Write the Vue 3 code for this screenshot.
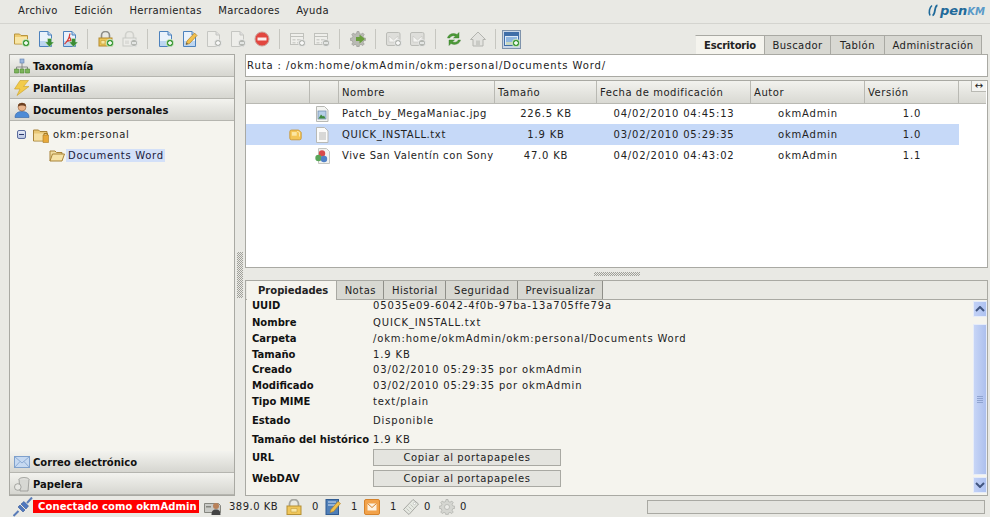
<script setup>
const menus = ['Archivo', 'Edición', 'Herramientas', 'Marcadores', 'Ayuda']

const tools = [
  'folder-add', 'doc-down', 'pdf-down', '|', 'lock-add', 'lock-off', '|',
  'doc-add', 'doc-edit', 'doc-off-add', 'doc-off-del', 'stop', '|',
  'form-add', 'form-del', '|', 'gear-go', '|', 'mail-add', 'mail-del', '|',
  'refresh', 'home', '|',
]

const topTabs = ['Escritorio', 'Buscador', 'Tablón', 'Administración']
const bottomTabs = ['Propiedades', 'Notas', 'Historial', 'Seguridad', 'Previsualizar']
const columns = ['', '', 'Nombre', 'Tamaño', 'Fecha de modificación', 'Autor', 'Versión']

const files = [
  { icon: 'file-img', name: 'Patch_by_MegaManiac.jpg', size: '226.5 KB', date: '04/02/2010 04:45:13', author: 'okmAdmin', version: '1.0' },
  { icon: 'file-txt', name: 'QUICK_INSTALL.txt', size: '1.9 KB', date: '03/02/2010 05:29:35', author: 'okmAdmin', version: '1.0', selected: true },
  { icon: 'file-mix', name: 'Vive San Valentín con Sony', size: '47.0 KB', date: '04/02/2010 04:43:02', author: 'okmAdmin', version: '1.1' },
]

const props = [
  ['UUID', '05035e09-6042-4f0b-97ba-13a705ffe79a'],
  ['Nombre', 'QUICK_INSTALL.txt'],
  ['Carpeta', '/okm:home/okmAdmin/okm:personal/Documents Word'],
  ['Tamaño', '1.9 KB'],
  ['Creado', '03/02/2010 05:29:35 por okmAdmin'],
  ['Modificado', '03/02/2010 05:29:35 por okmAdmin'],
  ['Tipo MIME', 'text/plain'],
  ['Estado', 'Disponible'],
  ['Tamaño del histórico', '1.9 KB'],
]

const stats = [
  { icon: 'st-lock', value: '0', cls: 'st-a' },
  { icon: 'st-note', value: '1', cls: 'st-a' },
  { icon: 'st-mail', value: '1', cls: 'st-a' },
  { icon: 'st-tag', value: '0', cls: 'st-b' },
  { icon: 'st-gear', value: '0', cls: 'st-b' },
]
</script>

<template>
  <div class="app">
    <svg class="defs" aria-hidden="true">
      <symbol id="b-add" viewBox="0 0 16 16"><circle cx="12" cy="12" r="3.8" fill="#3f9a3a" stroke="#e8f5e0" stroke-width=".8" /><path d="M12 10v4M10 12h4" stroke="#fff" stroke-width="1.4" /></symbol>
      <symbol id="b-off-add" viewBox="0 0 16 16"><circle cx="12" cy="12" r="3.6" fill="#b4b7b2" stroke="#eee" stroke-width=".8" /><path d="M12 10v4M10 12h4" stroke="#fff" stroke-width="1.3" /></symbol>
      <symbol id="b-off-del" viewBox="0 0 16 16"><circle cx="12" cy="12" r="3.6" fill="#b4b7b2" stroke="#eee" stroke-width=".8" /><path d="M10 12h4" stroke="#fff" stroke-width="1.3" /></symbol>
      <symbol id="b-down" viewBox="0 0 16 16"><path d="M9.500 7.500h4v3.500h2.500L11.500 16 7 11h2.500z" fill="#3c8d35" stroke="#d7ecd0" stroke-width=".5" /></symbol>
      <symbol id="s-doc" viewBox="0 0 16 16"><path d="M1.500 .5h8.500l3.500 3.500v11.500h-12z" fill="#eaf2fb" stroke="#4d82bd" /><path d="M10 .5v3.500h3.500" fill="#bcd4ee" stroke="#4d82bd" /><path d="M2 10h11v5H2z" fill="#bdd6f0" /></symbol>
      <symbol id="s-doc-off" viewBox="0 0 16 16"><path d="M1.500 .5h8.500l3.500 3.500v11.500h-12z" fill="#eeeeea" stroke="#c5c6c2" /><path d="M10 .5v3.500h3.500" fill="#ddd" stroke="#c5c6c2" /></symbol>
      <symbol id="s-form" viewBox="0 0 16 16"><rect x=".5" y="2.500" width="13" height="11" fill="#efefeb" stroke="#c0c1bc" /><path d="M.5 5.500h13" stroke="#c0c1bc" /><path d="M2.500 8h3v1.500h-3zM7 8h4.500v1.500H7zM2.500 11h3v1.500h-3zM7 11h4.500v1.500H7z" fill="#cfd0cb" /></symbol>
      <symbol id="s-mail" viewBox="0 0 16 16"><rect x=".5" y="1.500" width="13.500" height="13" rx="1.500" fill="#dededa" stroke="#bbbcb7" /><path d="M3 5l4.500 4L12 5v6H3z" fill="#f5f5f2" stroke="#c4c5c0" stroke-width=".6" /></symbol>

      <symbol id="folder-add" viewBox="0 0 16 16"><path d="M.5 3h5l1.500 1.500h6.500v8.500H.5z" fill="#f0cd72" stroke="#b8953f" /><path d="M1 6h12v6.500H1z" fill="#f8e6a6" /><use href="#b-add" /></symbol>
      <symbol id="doc-down" viewBox="0 0 16 16"><use href="#s-doc" /><use href="#b-down" /></symbol>
      <symbol id="pdf-down" viewBox="0 0 16 16"><use href="#s-doc" /><path d="M8 2.500C7 8 5 11 2.500 13M7.500 6c1 3 3 5 6 5.500M4 10.500c2-.8 4-1 7-.8" fill="none" stroke="#d8322c" stroke-width="1.200" /><use href="#b-down" /></symbol>
      <symbol id="lock-add" viewBox="0 0 16 16"><path d="M3.500 7V4.500a4 4 0 0 1 8 0V7" fill="none" stroke="#8d8d88" stroke-width="1.600" /><rect x="1" y="7" width="13" height="8" fill="#ecc557" stroke="#b48a2c" /><path d="M3 9.500h4v3.500H3z" fill="#f8e6a0" stroke="#c19a37" stroke-width=".6" /><use href="#b-add" /></symbol>
      <symbol id="lock-off" viewBox="0 0 16 16"><path d="M3.500 7V4.500a4 4 0 0 1 8 0V7" fill="none" stroke="#d0d1cc" stroke-width="1.600" /><rect x="1" y="7" width="13" height="8" fill="#ececE8" stroke="#c8c9c4" /><path d="M3 9.500h4v3.500H3z" fill="#dcdcd8" /><use href="#b-off-del" /></symbol>
      <symbol id="doc-add" viewBox="0 0 16 16"><use href="#s-doc" /><use href="#b-add" /></symbol>
      <symbol id="doc-edit" viewBox="0 0 16 16"><use href="#s-doc" /><path d="M4 13.500l1-3.500 7.500-8 2.500 2.500L7.500 12.500z" fill="#f1c04d" stroke="#b17f22" stroke-width=".7" /><path d="M4 13.500l.6-2 1.400 1.400z" fill="#555" /></symbol>
      <symbol id="doc-off-add" viewBox="0 0 16 16"><use href="#s-doc-off" /><use href="#b-off-add" /></symbol>
      <symbol id="doc-off-del" viewBox="0 0 16 16"><use href="#s-doc-off" /><use href="#b-off-del" /></symbol>
      <symbol id="stop" viewBox="0 0 16 16"><circle cx="8" cy="8" r="7" fill="#e2463f" stroke="#c9a09a" /><path d="M3.500 6.500h9v3h-9z" fill="#fbeeee" /></symbol>
      <symbol id="form-add" viewBox="0 0 16 16"><use href="#s-form" /><use href="#b-off-add" /></symbol>
      <symbol id="form-del" viewBox="0 0 16 16"><use href="#s-form" /><use href="#b-off-del" /></symbol>
      <symbol id="gear-go" viewBox="0 0 16 16"><path d="M7 .5h2l.4 2 1.600.7 1.800-1.100 1.400 1.400-1.100 1.800.7 1.600 2 .4v2l-2 .4-.7 1.600 1.100 1.800-1.400 1.400-1.800-1.100-1.600.7-.4 2H7l-.4-2-1.600-.7-1.800 1.100-1.400-1.400 1.100-1.800-.7-1.600-2-.4v-2l2-.4.7-1.600L1.800 3.500l1.400-1.400 1.800 1.100 1.600-.7z" fill="#b9bab4" stroke="#93948e" stroke-width=".6" /><path d="M6 6h3.500V3.500L15 8l-5.500 4.500V10H6z" fill="#6a9e3c" /></symbol>
      <symbol id="mail-add" viewBox="0 0 16 16"><use href="#s-mail" /><use href="#b-off-add" /></symbol>
      <symbol id="mail-del" viewBox="0 0 16 16"><use href="#s-mail" /><use href="#b-off-del" /></symbol>
      <symbol id="refresh" viewBox="0 0 16 16"><path d="M1.500 7C2.500 3 7 1.500 11 3.500L13 1.500V7H7.500l2-1.800C7 4 4.500 5 3.800 7z" fill="#4d9a38" stroke="#2f7324" stroke-width=".4" /><path d="M14.500 9C13.500 13 9 14.500 5 12.500L3 14.500V9h5.500l-2 1.800c2.500 1.200 5 .2 5.700-1.800z" fill="#4d9a38" stroke="#2f7324" stroke-width=".4" /></symbol>
      <symbol id="home" viewBox="0 0 16 16"><path d="M8 1L.5 8.500h2.500v6.500h10V8.500h2.500z" fill="#e3e3df" stroke="#b3b4af" /><path d="M6 9.500h4v5.500H6z" fill="#c9cac5" /></symbol>

      <symbol id="tree-net" viewBox="0 0 16 16"><path d="M8 5v4M2.500 9h11M2.500 9v2M8 9v2M13.500 9v2" fill="none" stroke="#777" stroke-width=".8" /><rect x="6" y="1" width="4" height="4" fill="#9ab6dd" stroke="#5f7fae" stroke-width=".6" /><path d="M.5 11h4v4h-4zM6 11h4v4H6zM11.500 11h4v4h-4z" fill="#7cb45b" stroke="#4d8a33" stroke-width=".6" /></symbol>
      <symbol id="bolt" viewBox="0 0 16 16"><path d="M6 .5h8.500L9.500 6.500H15L3 15.500 6 9H.5z" fill="#f2cb4a" stroke="#c99f26" stroke-width=".6" /></symbol>
      <symbol id="person" viewBox="0 0 16 16"><path d="M1 15.500c0-4 2.500-6 7-6s7 2 7 6z" fill="#4d8bd6" stroke="#2f62a4" stroke-width=".6" /><circle cx="8" cy="5" r="4" fill="#e8b48c" stroke="#96603a" stroke-width=".6" /><path d="M4 4.500C4 1.500 6 1 8 1s4 .5 4 3.500C10 3 6 3 4 4.500z" fill="#6a3f20" /></symbol>
      <symbol id="mail" viewBox="0 0 16 16"><rect x=".5" y="2.500" width="15" height="11" fill="#c6d9f1" stroke="#7ea0cc" /><path d="M.5 2.500L8 9l7.500-6.500M.5 13.500L6 7.500M15.500 13.500L10 7.500" fill="none" stroke="#7ea0cc" stroke-width=".8" /></symbol>
      <symbol id="trash" viewBox="0 0 16 16"><ellipse cx="10" cy="3.500" rx="5" ry="2" fill="#e2e2de" stroke="#8a8b86" stroke-width=".7" /><path d="M5 3.500l1 11.500h8l1-11.500" fill="#d7d8d3" stroke="#8a8b86" stroke-width=".7" /><circle cx="3.800" cy="11" r="3.300" fill="#e8e8e4" stroke="#8a8b86" stroke-width=".7" /></symbol>
      <symbol id="folder-home" viewBox="0 0 16 16"><path d="M.5 3h5L7 4.500h7V14H.5z" fill="#e9c877" stroke="#a88338" /><path d="M1 6.500h12.500V13.500H1z" fill="#f5dfa2" /><path d="M10 8h5.500v7.500H10z" fill="#e8a93a" stroke="#a77a22" stroke-width=".6" /><path d="M11 8V6.500h3.500V8" fill="none" stroke="#a77a22" /></symbol>
      <symbol id="folder-open" viewBox="0 0 16 16"><path d="M1 13V3h5l1.500 1.500H13V6" fill="#f0dca0" stroke="#a88338" /><path d="M1 13l2.500-7h12L13 13z" fill="#f6e2a6" stroke="#a88338" /></symbol>

      <symbol id="file-img" viewBox="0 0 16 16"><path d="M2.500 .5h8l3.500 3.500v11.500H2.500z" fill="#f4f5f2" stroke="#b8b9b5" /><rect x="4" y="5" width="8" height="8" fill="#b7cfe8" stroke="#6a88aa" stroke-width=".7" /><path d="M4.500 12.500l2.500-4 2 2 1-1 1.500 3z" fill="#3f8a3c" /></symbol>
      <symbol id="file-txt" viewBox="0 0 16 16"><path d="M2.500 .5h8l3.500 3.500v11.500H2.500z" fill="#fbfbfa" stroke="#b8b9b5" /><path d="M5 6h7M5 8h7M5 10h7M5 12h7" stroke="#a4a5a1" stroke-width=".8" /></symbol>
      <symbol id="file-mix" viewBox="0 0 16 16"><path d="M4.500 .5h8l3 3v12h-11z" fill="#f2f2ef" stroke="#c4c5c1" /><circle cx="8" cy="5.500" r="3.200" fill="#d84a4a" /><circle cx="4.500" cy="10" r="3.200" fill="#5aa65a" /><circle cx="10" cy="11" r="3.200" fill="#4f80c6" /></symbol>
      <symbol id="note" viewBox="0 0 16 16"><path d="M1 4.500a2 2 0 0 1 2-2h9l3 3v7a2 2 0 0 1-2 2H3a2 2 0 0 1-2-2z" fill="#f3c556" stroke="#c9922c" /><path d="M3.500 5h6v4.500h-6z" fill="#fbe7a4" /><path d="M10 4l3 1.500v5" fill="none" stroke="#fff1c4" /></symbol>

      <symbol id="plug" viewBox="0 0 20 20"><path d="M.5 19l5-5M14 6l5-5.500" stroke="#5a7cb8" stroke-width="2" /><path d="M5 10l5 5 2-2-5-5zM8 7l5 5 2.500-3L11 4.500z" fill="#4f78c0" stroke="#365794" stroke-width=".6" /></symbol>
      <symbol id="drive" viewBox="0 0 18 18"><path d="M.5 5.500h14l2 2v7h-16z" fill="#c9cac6" stroke="#85867f" /><path d="M2 8h5v1.500H2z" fill="#85867f" /><circle cx="12" cy="8" r="3" fill="#b8815a" /><path d="M7.500 17c0-4 1.500-5.500 4.500-5.500s4.500 1.500 4.500 5.500z" fill="#444" /></symbol>
      <symbol id="st-lock" viewBox="0 0 16 16"><path d="M3.500 7V5a4.500 4.500 0 0 1 9 0v2" fill="none" stroke="#a5a6a1" stroke-width="1.800" /><rect x="1" y="7" width="14" height="8.500" fill="#f0c65a" stroke="#b58f33" /><path d="M5 9.500h6v3.500H5z" fill="#f9e6a2" stroke="#c29d3c" stroke-width=".6" /></symbol>
      <symbol id="st-note" viewBox="0 0 16 16"><rect x="1" y=".5" width="12.500" height="15" fill="#4f7fb8" stroke="#2f5b92" /><path d="M3 3h8M3 6h8" stroke="#d5e3f4" /><path d="M5 13.500l1-3 7-8 2.500 2-7 8z" fill="#f0c14d" stroke="#b37f22" stroke-width=".6" /></symbol>
      <symbol id="st-mail" viewBox="0 0 16 16"><rect x=".5" y=".5" width="15" height="15" rx="1.500" fill="#f2a24a" stroke="#d5822a" /><path d="M3.500 4.500h9v7h-9z" fill="#fdf2e2" /><path d="M3.500 4.500l4.500 4 4.500-4" fill="none" stroke="#d5822a" /></symbol>
      <symbol id="st-tag" viewBox="0 0 16 16"><path d="M10 .5L15.500 5 6 15.500.5 10.500z" fill="#e6e9e2" stroke="#a5a6a1" /><path d="M3.500 9.500l3 3M5.500 7.500l3 3M7.500 5.500l3 3" stroke="#b2b3ae" stroke-width=".7" /><circle cx="11.500" cy="4.500" r="1.200" fill="#fff" stroke="#a5a6a1" stroke-width=".5" /></symbol>
      <symbol id="st-gear" viewBox="0 0 16 16"><path d="M7 .5h2l.4 2 1.600.7 1.800-1.100 1.400 1.400-1.100 1.800.7 1.600 2 .4v2l-2 .4-.7 1.600 1.100 1.800-1.400 1.400-1.800-1.100-1.600.7-.4 2H7l-.4-2-1.600-.7-1.800 1.100-1.400-1.400 1.100-1.800-.7-1.600-2-.4v-2l2-.4.7-1.600L1.800 3.500l1.400-1.400 1.800 1.100 1.600-.7z" fill="#d5d6d1" stroke="#a5a6a1" stroke-width=".6" /><circle cx="8" cy="8" r="2.500" fill="#ecece8" stroke="#a5a6a1" stroke-width=".6" /></symbol>
      <symbol id="screen-add" viewBox="0 0 16 16"><rect x=".5" y="1.500" width="14" height="13" fill="#dde9f7" stroke="#3f6ea8" /><path d="M1 2h13v3H1z" fill="#3f6ea8" /><path d="M2 6h11v5H2z" fill="#8fb6e0" /><path d="M2 11h11v3H2z" fill="#c9d8c0" /><use href="#b-add" /></symbol>
    </svg>

    <header class="menubar">
      <span v-for="m in menus" :key="m" class="menu-item">{{ m }}</span>
      <span class="logo">
        <svg class="logo-o" viewBox="0 0 12 13"><path d="M4 1.500C1.500 3.500 .5 8 2 11.500" fill="none" stroke="#1f6a9a" stroke-width="1.600" /><path d="M9.500 1.500C8 1.500 7.500 3 7 6c-.4 2.500-.8 5-2.500 5.500" fill="none" stroke="#1f6a9a" stroke-width="1.800" /></svg>
        <i>pen</i><b>KM</b>
      </span>
    </header>

    <div class="toolbar">
      <template v-for="(t, i) in tools" :key="i">
        <span v-if="t === '|'" class="tool-sep"></span>
        <svg v-else class="icon"><use :href="'#' + t" /></svg>
      </template>
      <span class="tool-active"><svg class="icon"><use href="#screen-add" /></svg></span>
      <nav class="top-tabs">
        <span v-for="(t, i) in topTabs" :key="t" class="top-tab" :class="{ on: i === 0 }">{{ t }}</span>
      </nav>
    </div>

    <main class="main">
      <aside class="side">
        <div class="stack-head"><svg class="icon"><use href="#tree-net" /></svg>Taxonomía</div>
        <div class="stack-head"><svg class="icon"><use href="#bolt" /></svg>Plantillas</div>
        <div class="stack-head"><svg class="icon"><use href="#person" /></svg>Documentos personales</div>
        <div class="tree">
          <div class="tree-row">
            <span class="tree-toggle"></span>
            <svg class="icon"><use href="#folder-home" /></svg>
            <span>okm:personal</span>
          </div>
          <div class="tree-row tree-child">
            <svg class="icon"><use href="#folder-open" /></svg>
            <span class="tree-sel">Documents Word</span>
          </div>
        </div>
        <div class="stack-head"><svg class="icon"><use href="#mail" /></svg>Correo electrónico</div>
        <div class="stack-head"><svg class="icon"><use href="#trash" /></svg>Papelera</div>
      </aside>

      <div class="gutter"><span class="grip-v"></span></div>

      <section class="content">
        <div class="path">Ruta : /okm:home/okmAdmin/okm:personal/Documents Word/</div>

        <div class="table">
          <div class="t-head">
            <span v-for="(c, i) in columns" :key="i" class="th">{{ c }}</span>
            <span class="th th-end"><span class="resize">↔</span></span>
          </div>
          <div v-for="f in files" :key="f.name" class="t-row" :class="{ sel: f.selected }">
            <span class="td td-c"><svg v-if="f.selected" class="icon note"><use href="#note" /></svg></span>
            <span class="td td-c"><svg class="icon file"><use :href="'#' + f.icon" /></svg></span>
            <span class="td td-name">{{ f.name }}</span>
            <span class="td td-c">{{ f.size }}</span>
            <span class="td td-c">{{ f.date }}</span>
            <span class="td td-c">{{ f.author }}</span>
            <span class="td td-c">{{ f.version }}</span>
          </div>
        </div>

        <div class="splitter"><span class="grip-h"></span></div>

        <div class="details">
          <div class="d-tabs">
            <span v-for="(t, i) in bottomTabs" :key="t" class="d-tab" :class="{ on: i === 0 }">{{ t }}</span>
          </div>
          <div class="d-body">
            <div class="d-grid">
              <template v-for="p in props" :key="p[0]">
                <b>{{ p[0] }}</b>
                <span>{{ p[1] }}</span>
              </template>
              <b>URL</b>
              <span class="copy">Copiar al portapapeles</span>
              <b>WebDAV</b>
              <span class="copy">Copiar al portapapeles</span>
            </div>
            <div class="scroll">
              <span class="sb-btn"><svg viewBox="0 0 10 6"><path d="M1 5l4-4 4 4" fill="none" stroke="#41557f" stroke-width="2" /></svg></span>
              <span class="sb-thumb"><i></i></span>
              <span class="sb-btn"><svg viewBox="0 0 10 6"><path d="M1 1l4 4 4-4" fill="none" stroke="#41557f" stroke-width="2" /></svg></span>
            </div>
          </div>
        </div>
      </section>
    </main>

    <footer class="status">
      <svg class="plug"><use href="#plug" /></svg>
      <span class="conn">Conectado como okmAdmin</span>
      <svg class="drive"><use href="#drive" /></svg>
      <span class="quota">389.0 KB</span>
      <span v-for="s in stats" :key="s.icon" class="stat" :class="s.cls">
        <svg class="icon"><use :href="'#' + s.icon" /></svg>{{ s.value }}
      </span>
      <span class="progress"></span>
    </footer>
  </div>
</template>

<style>
html,
body {
  margin: 0;
  background: #e9e9e4;
}
</style>

<style scoped>
.app {
  width: 990px;
  height: 517px;
  overflow: hidden;
  background: #e9e9e4;
  font-family: 'DejaVu Sans', Verdana, sans-serif;
  font-size: 10px;
  letter-spacing: 0.35px;
  color: #222;
  display: flex;
  flex-direction: column;
}
.defs {
  display: none;
}
.icon {
  width: 16px;
  height: 16px;
  flex: none;
}
.menubar {
  height: 24px;
  box-sizing: border-box;
  border-bottom: 1px solid #d4d4cf;
  padding: 0 5px 3px 18px;
  display: flex;
  align-items: center;
  flex: none;
}
.menu-item {
  margin-right: 16.5px;
}
.logo {
  margin-left: auto;
  display: flex;
  align-items: baseline;
  font-size: 13px;
  letter-spacing: 0;
  font-weight: bold;
  font-style: italic;
  color: #1f6a9a;
}
.logo-o {
  width: 12px;
  height: 13px;
  align-self: center;
}
.logo i {
  font-style: italic;
}
.logo b {
  font-size: 10px;
  color: #5a9ac8;
}
.toolbar {
  height: 30px;
  flex: none;
  padding-left: 14px;
  padding-right: 8px;
  display: flex;
  align-items: center;
  gap: 8px;
}
.tool-sep {
  width: 1px;
  height: 20px;
  background: #c6c6c0;
  margin: 0 2px 0 1px;
}
.tool-active {
  width: 19px;
  height: 19px;
  box-sizing: border-box;
  margin-left: -4px;
  border: 1px solid #7f93ab;
  background: #c9d6e6;
  display: flex;
  align-items: center;
  justify-content: center;
}
.top-tabs {
  margin-left: auto;
  align-self: flex-end;
  display: flex;
  height: 19px;
}
.top-tab {
  box-sizing: border-box;
  height: 19px;
  padding-top: 4px;
  background: #d8d8d2;
  border: 1px solid #a9a9a3;
  border-bottom: 0;
  border-left: 0;
  text-align: center;
  letter-spacing: 0.45px;
  white-space: nowrap;
}
.top-tab:nth-child(1) {
  width: 70px;
}
.top-tab:nth-child(2) {
  width: 66px;
}
.top-tab:nth-child(3) {
  width: 54px;
}
.top-tab:nth-child(4) {
  width: 97px;
}
.top-tab.on {
  background: #f5f4ee;
  font-weight: bold;
  border-left: 1px solid #e9e9e4;
  letter-spacing: -0.2px;
}
.main {
  flex: 1;
  min-height: 0;
  display: flex;
  padding-left: 9px;
  padding-right: 2px;
  height: 442px;
}
.side {
  width: 226px;
  box-sizing: border-box;
  border: 1px solid #a9a9a3;
  background: #f5f4ee;
  flex: none;
  display: flex;
  flex-direction: column;
  height: 442px;
}
.stack-head {
  height: 22px;
  box-sizing: border-box;
  flex: none;
  display: flex;
  align-items: center;
  gap: 3px;
  padding-left: 4px;
  padding-top: 2px;
  background: linear-gradient(#f3f3ef, #d6d6d0);
  border-bottom: 1px solid #b5b5af;
  font-weight: bold;
  letter-spacing: 0;
  color: #111;
}
.stack-head .icon {
  margin-top: -2px;
}
.tree {
  flex: 1;
  padding-top: 3px;
  letter-spacing: 0.7px;
}
.tree-row {
  height: 21px;
  display: flex;
  align-items: center;
  gap: 4px;
  padding-left: 7px;
}
.tree-child {
  padding-left: 39px;
  gap: 1px;
}
.tree-toggle {
  width: 9px;
  height: 9px;
  box-sizing: border-box;
  border: 1px solid #5a6b9e;
  border-radius: 2px;
  background: linear-gradient(#e6ebf6, #b8c4e2);
  position: relative;
  margin-right: 3px;
}
.tree-toggle::after {
  content: '';
  position: absolute;
  left: 1px;
  right: 1px;
  top: 3px;
  height: 1px;
  background: #2c3a6e;
}
.tree-sel {
  background: #d3e0f8;
  padding: 1px 1px 1px 2px;
  line-height: 11px;
  color: #1a1a3a;
}
.gutter {
  width: 10px;
  flex: none;
  display: flex;
  align-items: center;
  justify-content: center;
}
.grip-v {
  width: 6px;
  height: 46px;
  background: conic-gradient(#a0a09a 25%, transparent 0 50%, #a0a09a 0 75%, transparent 0) 0 0 / 2px 2px;
}
.content {
  width: 743px;
  flex: none;
  display: flex;
  flex-direction: column;
}
.path {
  height: 23px;
  box-sizing: border-box;
  background: #fff;
  border: 1px solid #a9a9a3;
  padding-left: 1px;
  line-height: 21px;
  letter-spacing: 0.9px;
  flex: none;
}
.table {
  margin-top: 3px;
  height: 188px;
  box-sizing: border-box;
  flex: none;
  background: #fff;
  border: 1px solid #a9a9a3;
}
.t-head,
.t-row {
  display: grid;
  grid-template-columns: 64px 29px 156px 102px 154px 114px 94px 27px;
}
.t-head {
  height: 22px;
}
.t-row {
  height: 21px;
  letter-spacing: 0.8px;
}
.th {
  box-sizing: border-box;
  background: linear-gradient(#f2f2ee, #d9d9d3);
  border-right: 1px solid #b9b9b3;
  border-bottom: 1px solid #b9b9b3;
  padding-left: 3px;
  padding-top: 1px;
  line-height: 21px;
  letter-spacing: 0.55px;
}
.th-end {
  border-right: 0;
  position: relative;
}
.resize {
  position: absolute;
  top: 0;
  right: 0;
  width: 15px;
  height: 11px;
  line-height: 9px;
  box-sizing: border-box;
  background: #f4f4f1;
  border: 1px solid #b9b9b3;
  border-top: 0;
  border-right: 0;
  text-align: center;
  font-size: 10px;
  letter-spacing: 0;
}
.t-row.sel .td {
  background: #c6d9f8;
}
.td {
  display: flex;
  align-items: center;
  white-space: nowrap;
  overflow: hidden;
}
.td-c {
  justify-content: center;
}
.td-name {
  padding-left: 3px;
  letter-spacing: 0.6px;
}
.note {
  margin-left: 34px;
  width: 13px;
  height: 13px;
}
.file {
  margin-right: 5px;
}
.splitter {
  height: 12px;
  flex: none;
  display: flex;
  align-items: center;
  justify-content: center;
}
.grip-h {
  width: 46px;
  height: 4px;
  background: conic-gradient(#a0a09a 25%, transparent 0 50%, #a0a09a 0 75%, transparent 0) 0 0 / 2px 2px;
}
.details {
  flex: 1;
  min-height: 0;
  box-sizing: border-box;
  border: 1px solid #a9a9a3;
  display: flex;
  flex-direction: column;
  background: #f5f4ee;
}
.d-tabs {
  height: 18px;
  flex: none;
  display: flex;
  background: #e9e9e4;
  padding-left: 1px;
  border-bottom: 1px solid #a9a9a3;
}
.d-tab {
  box-sizing: border-box;
  height: 18px;
  padding-top: 3px;
  background: #d8d8d2;
  border-right: 1px solid #8f8f89;
  letter-spacing: 0.5px;
  line-height: 13px;
  text-align: center;
  white-space: nowrap;
}
.d-tab:nth-child(2) {
  width: 47px;
}
.d-tab:nth-child(3) {
  width: 62px;
}
.d-tab:nth-child(4) {
  width: 72px;
}
.d-tab:nth-child(5) {
  width: 85px;
}
.d-tab.on {
  height: 19px;
  background: #f5f4ee;
  font-weight: bold;
  letter-spacing: 0;
  padding: 3px 8px 0 11px;
  border-right: 1px solid #a9a9a3;
  position: relative;
  z-index: 1;
}
.d-body {
  flex: 1;
  min-height: 0;
  display: flex;
  padding-left: 6px;
  padding-right: 0;
  justify-content: space-between;
}
.d-grid {
  display: grid;
  grid-template-columns: 121px 188px;
  grid-template-rows: 17px 16px 16px 16px 15px 16px 17px 20px 18px 19px 22px;
  align-items: center;
  margin-top: -3px;
  letter-spacing: 0.85px;
}
.d-grid b {
  letter-spacing: 0;
  color: #111;
  white-space: nowrap;
}
.d-grid span {
  white-space: nowrap;
}
.d-grid .copy {
  height: 17px;
  box-sizing: border-box;
  border: 1px solid #a9a9a3;
  background: #e4e4df;
  text-align: center;
  line-height: 15px;
  letter-spacing: 0.62px;
}
.scroll {
  width: 14px;
  margin-top: 1px;
  margin-bottom: 2px;
  display: flex;
  flex-direction: column;
  flex: none;
}
.sb-btn {
  height: 16px;
  box-sizing: border-box;
  border: 1px solid #e6ecf9;
  background: linear-gradient(90deg, #c2d1f6, #aec2f1);
  display: flex;
  align-items: center;
  justify-content: center;
  flex: none;
}
.sb-btn svg {
  width: 10px;
  height: 6px;
}
.sb-thumb {
  margin: 7px 0 2px;
  flex: 1;
  box-sizing: border-box;
  border: 1px solid #e6ecf9;
  background: linear-gradient(90deg, #c7d5f6, #adc0ee);
  display: flex;
  align-items: center;
  justify-content: center;
}
.sb-thumb i {
  width: 6px;
  height: 8px;
  background: repeating-linear-gradient(#8fa3d0 0 1px, transparent 1px 2px);
}
.status {
  flex: none;
  height: 21px;
  display: flex;
  align-items: center;
  padding-left: 13px;
  padding-right: 5px;
}
.plug {
  width: 20px;
  height: 20px;
  flex: none;
}
.conn {
  width: 166px;
  height: 13px;
  box-sizing: border-box;
  background: #f00;
  color: #fff;
  font-weight: bold;
  line-height: 13px;
  padding-left: 5px;
  letter-spacing: 0.1px;
  white-space: nowrap;
  flex: none;
}
.drive {
  width: 18px;
  height: 18px;
  margin-left: 5px;
  flex: none;
}
.quota {
  margin-left: 7px;
  width: 57px;
  flex: none;
  letter-spacing: 0.5px;
}
.stat {
  display: flex;
  align-items: center;
  flex: none;
}
.st-a {
  width: 39px;
}
.st-a .icon {
  margin-right: 10px;
}
.st-b {
  width: 36px;
}
.st-b .icon {
  margin-right: 5px;
}
.progress {
  margin-left: auto;
  width: 338px;
  height: 14px;
  box-sizing: border-box;
  border: 1px solid #a9a9a3;
  background: #e4e4df;
}
</style>
